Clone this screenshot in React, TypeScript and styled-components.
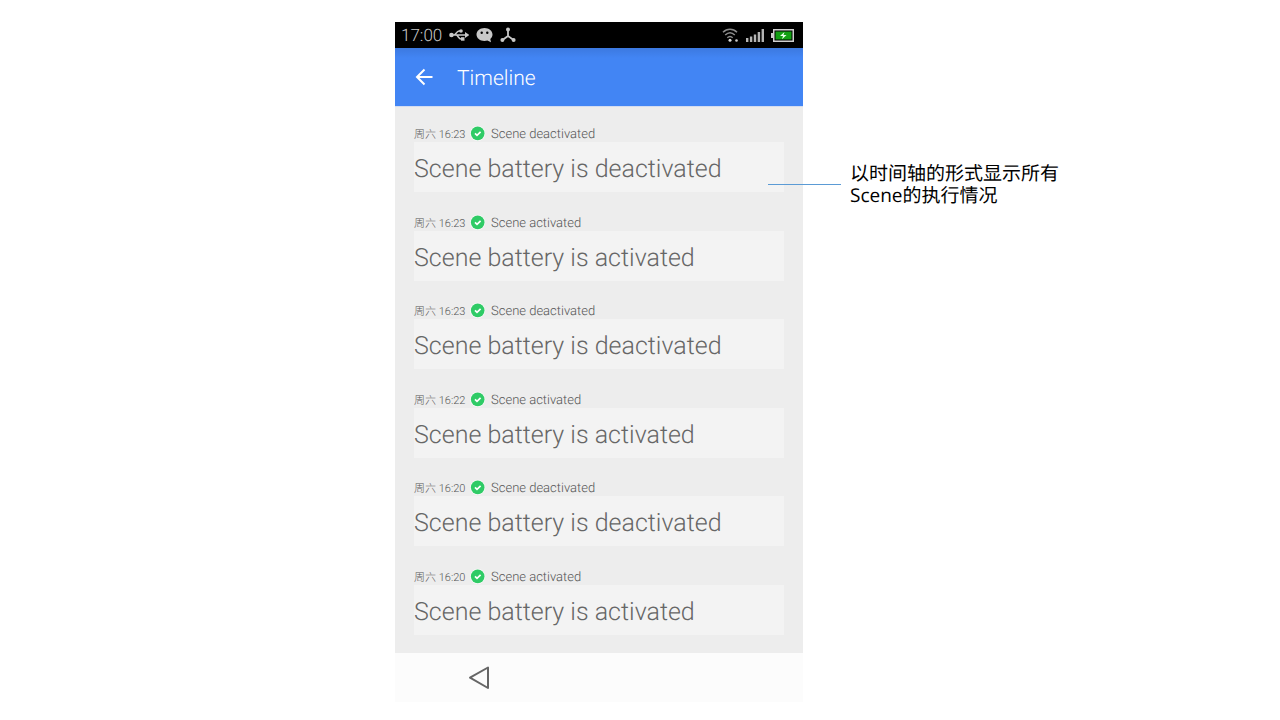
import React from "react";
import styled, { createGlobalStyle } from "styled-components";

const GlobalStyle = createGlobalStyle`
  * { box-sizing: border-box; }
  body {
    margin: 0;
    background: #fff;
    font-family: Roboto, "Noto Sans CJK SC", sans-serif;
    text-rendering: geometricPrecision;
  }
`;

const Page = styled.main`
  display: grid;
  grid-template-columns: 395fr 408fr 477fr;
  min-height: 100vh;
  padding: 22px 0 18px;
`;

const Phone = styled.section`
  grid-column: 2;
  display: flex;
  flex-direction: column;
  min-width: 0;
  background: #ededed;
`;

const StatusBar = styled.div`
  display: flex;
  align-items: center;
  justify-content: space-between;
  height: 26px;
  padding: 0 9px 0 6px;
  background: #000;
  color: #c8c8c8;
`;

const StatusGroup = styled.div<{ $gap: number }>`
  display: flex;
  align-items: center;
  gap: ${(p) => p.$gap}px;
`;

const Clock = styled.time`
  padding-top: 2px;
  font-size: 17px;
  font-weight: 300;
  line-height: 24px;
`;

const AppBar = styled.header`
  display: flex;
  align-items: center;
  gap: 23px;
  height: 58px;
  padding: 0 19px;
  color: #fff;
  background: linear-gradient(#3c79e0, #4285f4 10px);
  box-shadow: 0 1px 0 #d3dcf0;
`;

const IconButton = styled.button`
  display: flex;
  padding: 0;
  border: 0;
  background: none;
  color: inherit;
  cursor: pointer;
`;

const Title = styled.h1`
  margin: 0;
  padding-top: 4px;
  font-size: 21px;
  font-weight: 300;
  line-height: 26px;
`;

const Events = styled.ul`
  flex: 1;
  display: flex;
  flex-direction: column;
  justify-content: space-between;
  gap: 12px;
  margin: 0;
  padding: 19px 19px 18px;
  list-style: none;
`;

const EventMeta = styled.div`
  display: flex;
  align-items: flex-start;
  height: 17px;
  color: #555;
  font-weight: 300;
  line-height: 20px;
  white-space: nowrap;
`;

const EventTime = styled.time`
  width: 56px;
  font-size: 11px;
`;

const EventKind = styled.span`
  margin-left: 5px;
  font-size: 13px;
`;

const EventCard = styled.p`
  margin: 0;
  height: 50px;
  background: #f3f3f3;
  color: #666;
  font-size: 25px;
  font-weight: 300;
  line-height: 56px;
  white-space: nowrap;
`;

const NavBar = styled.nav`
  display: flex;
  align-items: center;
  height: 49px;
  padding-left: 73px;
  background: #fcfcfc;
  color: #666;
`;

const Note = styled.aside`
  display: flex;
  align-items: flex-start;
  gap: 9px;
  margin: 140px 0 0 -35px;
  z-index: 1;
`;

const Leader = styled.hr`
  width: 73px;
  margin: 22px 0 0;
  border: 0;
  border-top: 1px solid #5b9bd5;
`;

const NoteText = styled.p`
  margin: 0;
  color: #000;
  font-family: "Open Sans", "Noto Sans CJK SC", sans-serif;
  font-size: 19px;
  line-height: 22px;
`;

const UsbIcon = () => (
  <svg width="20" height="14" viewBox="0 0 20 14" fill="none" stroke="currentColor" strokeWidth="1.6">
    <path d="M2 7h15M5 7c2 0 2.500-4 5-4h2M7 7c2 0 2.500 4 5 4h2" />
    <circle cx="2.500" cy="7" r="2.300" fill="currentColor" stroke="none" />
    <path d="M16 4 20.500 7 16 10z" fill="currentColor" stroke="none" />
    <circle cx="12" cy="3" r="1.800" fill="currentColor" stroke="none" />
    <path d="M12 9.200h3.500v3.500H12z" fill="currentColor" stroke="none" />
  </svg>
);

const ChatIcon = () => (
  <svg width="17" height="16" viewBox="0 0 17 16">
    <path
      d="M8.500 1C4 1 .5 3.900.5 7.500S4 14 8.500 14c1 0 2-.1 2.900-.4L15 15.200l-.7-3.200c1.400-1.200 2.200-2.700 2.200-4.500C16.500 3.900 13 1 8.500 1z"
      fill="currentColor"
    />
    <circle cx="5.700" cy="5.800" r="1.200" fill="#000" />
    <circle cx="11.300" cy="5.800" r="1.200" fill="#000" />
  </svg>
);

const HubIcon = () => (
  <svg width="16" height="16" viewBox="0 0 16 16" fill="currentColor">
    <path d="M8 3v6M8 9l-5.500 4M8 9l5.500 4" fill="none" stroke="currentColor" strokeWidth="1.800" />
    <circle cx="8" cy="2.600" r="2" />
    <circle cx="2.400" cy="13" r="2" />
    <circle cx="13.600" cy="13" r="2" />
  </svg>
);

const WifiIcon = () => (
  <svg width="17" height="14" viewBox="0 0 17 14" fill="none" stroke="#8c8c8c" strokeWidth="1.500">
    <path d="M1 4.200C5 .2 11 .2 15 4.200M3.200 7c3-2.900 6.600-2.900 9.600 0M5.300 9.700c1.700-1.600 3.700-1.600 5.400 0" />
    <circle cx="8" cy="12.200" r="1.500" fill="#ddd" stroke="none" />
    <circle cx="14.500" cy="12.500" r="1.300" fill="#ccc" stroke="none" />
  </svg>
);

const SignalIcon = () => (
  <svg width="18" height="13" viewBox="0 0 18 13" fill="#b4b4b4">
    <path d="M0 9h2.400v4H0zM3.900 7.500h2.400V13H3.900zM7.800 5.500h2.400V13H7.800zM11.700 3h2.400v10h-2.400zM15.600 0H18v13h-2.400z" />
  </svg>
);

const BatteryIcon = () => (
  <svg width="23" height="13" viewBox="0 0 23 13">
    <path d="M0 4h2v5H0z" fill="#ccc" />
    <rect x="2.750" y=".75" width="19.500" height="11.500" fill="#000" stroke="#d0d0d0" strokeWidth="1.500" />
    <rect x="4.500" y="2.500" width="16" height="8" fill="#12a012" />
    <path d="M13.500 3 9 7h3l-1 3.200L15.500 6h-3z" fill="#e8ffe8" />
  </svg>
);

const BackArrowIcon = () => (
  <svg width="20" height="20" viewBox="0 0 20 20" fill="none" stroke="currentColor" strokeWidth="2">
    <path d="M18.500 10H3M10.500 2.500 3 10l7.500 7.500" />
  </svg>
);

const CheckIcon = () => (
  <svg width="16" height="16" viewBox="0 0 16 16">
    <circle cx="7.700" cy="8.400" r="7.600" fill="#fafafa" />
    <circle cx="7.700" cy="8.400" r="6.800" fill="#2fcb66" />
    <path d="m5 8.400 2 2 3.600-3.600" fill="none" stroke="#fff" strokeWidth="1.700" />
  </svg>
);

const TriangleIcon = () => (
  <svg width="22" height="24" viewBox="0 0 22 24" fill="none" stroke="currentColor" strokeWidth="2" strokeLinejoin="round">
    <path d="M20 1.500v20.500L2 11.700z" />
  </svg>
);

const events = [
  { time: "周六 16:23", state: "deactivated" },
  { time: "周六 16:23", state: "activated" },
  { time: "周六 16:23", state: "deactivated" },
  { time: "周六 16:22", state: "activated" },
  { time: "周六 16:20", state: "deactivated" },
  { time: "周六 16:20", state: "activated" },
];

export default function App() {
  return (
    <>
      <GlobalStyle />
      <Page>
        <Phone>
          <StatusBar>
            <StatusGroup $gap={7}>
              <Clock>17:00</Clock>
              <UsbIcon />
              <ChatIcon />
              <HubIcon />
            </StatusGroup>
            <StatusGroup $gap={7}>
              <WifiIcon />
              <SignalIcon />
              <BatteryIcon />
            </StatusGroup>
          </StatusBar>
          <AppBar>
            <IconButton type="button" aria-label="Navigate up">
              <BackArrowIcon />
            </IconButton>
            <Title>Timeline</Title>
          </AppBar>
          <Events>
            {events.map((event, index) => (
              <li key={index}>
                <EventMeta>
                  <EventTime>{event.time}</EventTime>
                  <CheckIcon />
                  <EventKind>Scene {event.state}</EventKind>
                </EventMeta>
                <EventCard>Scene battery is {event.state}</EventCard>
              </li>
            ))}
          </Events>
          <NavBar>
            <IconButton type="button" aria-label="Back">
              <TriangleIcon />
            </IconButton>
          </NavBar>
        </Phone>
        <Note>
          <Leader />
          <NoteText>
            以时间轴的形式显示所有
            <br />
            Scene的执行情况
          </NoteText>
        </Note>
      </Page>
    </>
  );
}
